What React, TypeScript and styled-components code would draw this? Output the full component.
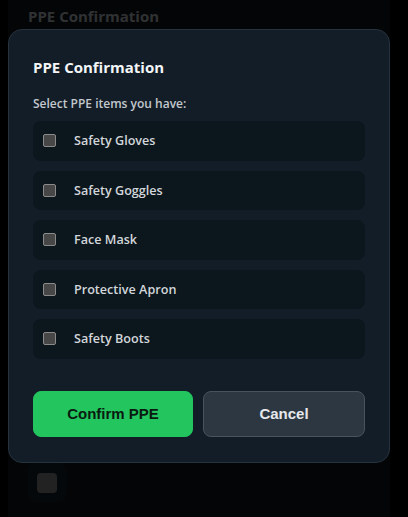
import React from 'react';
import styled, { createGlobalStyle } from 'styled-components';

const GlobalStyle = createGlobalStyle`
	html, body {
		margin: 0;
		padding: 0;
		background: #000;
		height: 100%;
	}
	#root {
		height: 100%;
	}
`;

const ITEMS = ['Safety Gloves', 'Safety Goggles', 'Face Mask', 'Protective Apron', 'Safety Boots'];

const App = () => {
	const [checked, setChecked] = React.useState<Record<string, boolean>>({});

	const toggle = (name: string) => {
		setChecked(prev => ({ ...prev, [name]: !prev[name] }));
	};

	return (
		<>
			<GlobalStyle />
			<ScPage>
				<ScPageTitle>PPE Confirmation</ScPageTitle>
				<ScPageSpacer />
				<ScPageRow>
					<ScPageCheck />
				</ScPageRow>
			</ScPage>

			<ScOverlay>
				<ScModal>
					<ScTitle>PPE Confirmation</ScTitle>
					<ScSubtitle>Select PPE items you have:</ScSubtitle>

					<ScList>
						{ITEMS.map(item => (
							<ScItem key={item}>
								<ScCheckbox
									type="checkbox"
									checked={!!checked[item]}
									onChange={() => toggle(item)}
								/>
								<ScLabel>{item}</ScLabel>
							</ScItem>
						))}
					</ScList>

					<ScActions>
						<ScButton variant="primary">Confirm PPE</ScButton>
						<ScButton variant="secondary">Cancel</ScButton>
					</ScActions>
				</ScModal>
			</ScOverlay>
		</>
	);
};

export default App;

const ScPage = styled.div`
	margin-left: 8px;
	width: 382px;
	min-height: 100%;
	background: #0f151b;
	box-sizing: border-box;
	padding: 6px 20px 0;
	display: flex;
	flex-direction: column;
`;

const ScPageTitle = styled.h1`
	margin: 0;
	font-family: 'Open Sans', sans-serif;
	font-size: 15px;
	font-weight: 700;
	color: #aab0b6;
	line-height: 20px;
`;

const ScPageSpacer = styled.div`
	height: 437px;
`;

const ScPageRow = styled.div`
	width: 38px;
	height: 39px;
	border-radius: 8px;
	background: #151d24;
	display: flex;
	align-items: center;
	justify-content: center;
`;

const ScPageCheck = styled.div`
	width: 20px;
	height: 20px;
	border-radius: 4px;
	background: #7a7a7a;
`;

const ScOverlay = styled.div`
	position: fixed;
	inset: 0;
	background: rgba(0, 0, 0, 0.72);
	display: flex;
	align-items: flex-start;
	padding: 29px 0 0 8px;
	box-sizing: border-box;
`;

const ScModal = styled.div`
	width: 382px;
	height: 434px;
	box-sizing: border-box;
	background: #121d28;
	border: 1px solid #26323d;
	border-radius: 14px;
	padding: 26px 24px 0;
	display: flex;
	flex-direction: column;
	font-family: 'Open Sans', sans-serif;
`;

const ScTitle = styled.h2`
	margin: 0;
	font-size: 15px;
	font-weight: 700;
	color: #f3f5f7;
	line-height: 22px;
`;

const ScSubtitle = styled.p`
	margin: 18px 0 0;
	font-size: 12px;
	font-weight: 600;
	color: #c3c8cd;
	line-height: 16px;
`;

const ScList = styled.div`
	margin-top: 9px;
	display: flex;
	flex-direction: column;
	gap: 10px;
`;

const ScItem = styled.label`
	height: 39.5px;
	box-sizing: border-box;
	background: #0c161d;
	border-radius: 8px;
	display: flex;
	align-items: center;
	padding-left: 10px;
	cursor: pointer;
`;

const ScCheckbox = styled.input`
	appearance: none;
	margin: 0;
	width: 13px;
	height: 13px;
	box-sizing: border-box;
	border: 1px solid #8a8a8a;
	border-radius: 2px;
	background: #474747;
	cursor: pointer;

	&:checked {
		background: #22c55e;
		border-color: #22c55e;
	}
`;

const ScLabel = styled.span`
	margin-left: 18px;
	font-size: 12.6px;
	font-weight: 600;
	color: #d2d6da;
`;

const ScActions = styled.div`
	margin-top: 32px;
	display: grid;
	grid-template-columns: 160px 162px;
	gap: 10px;
`;

const ScButton = styled.button<{ variant: 'primary' | 'secondary' }>`
	height: 46px;
	border-radius: 8px;
	font-family: 'Liberation Sans', Arial, sans-serif;
	font-size: 15px;
	font-weight: 700;
	cursor: pointer;
	box-sizing: border-box;
	background: ${p => (p.variant === 'primary' ? '#22c55e' : '#2d3741')};
	color: ${p => (p.variant === 'primary' ? '#0a1a10' : '#e6e8eb')};
	border: 1px solid ${p => (p.variant === 'primary' ? '#22c55e' : '#48535e')};
`;
